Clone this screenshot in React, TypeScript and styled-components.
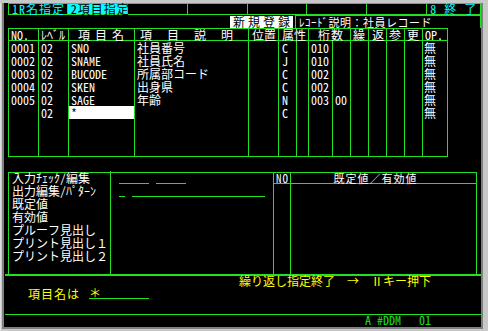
import React from 'react';
import styled, { createGlobalStyle } from 'styled-components';

// 項目定義画面 (端末エミュレータ風)

const GREEN = '#22e022';
const FONT = `"Noto Sans Mono CJK JP", "Noto Sans CJK JP", "Liberation Mono", monospace`;

const GlobalStyle = createGlobalStyle`
  html, body {
    margin: 0;
    padding: 0;
    background: #c8c8c8;
  }
`;

const Frame = styled.div`
  width: 488px;
  height: 331px;
  box-sizing: border-box;
  background: #c8c8c8;
  padding: 0 5px 5px 1px;
  border-left: 1px solid #e0e0e0;
`;

const Screen = styled.div`
  height: 100%;
  box-sizing: border-box;
  background: #000;
  border-left: 2px solid #808080;
  border-right: 2px solid #808080;
  border-bottom: 2px solid #808080;
  padding-left: 4px;
  font-family: ${FONT};
  font-size: 12px;
  color: #fff;
`;

const TabRow = styled.div`
  display: flex;
  margin-top: 3px;
  height: 12px;
`;

const Tab = styled.div<{ $active?: boolean; $w: number }>`
  width: ${(p) => p.$w}px;
  box-sizing: border-box;
  border: 1px solid ${GREEN};
  border-left: none;
  &:first-child {
    border-left: 1px solid ${GREEN};
  }
  background: ${(p) => (p.$active ? '#00ffff' : '#000')};
  color: ${(p) => (p.$active ? '#000' : '#00ffff')};
  line-height: 10px;
  padding-left: 3px;
  white-space: nowrap;
  letter-spacing: 1px;
`;

const InfoRow = styled.div`
  display: flex;
  height: 13px;
  align-items: stretch;
  padding-left: 222px;
`;

const ModeBox = styled.div`
  width: 63px;
  margin-top: 1px;
  background: #fff;
  color: #000;
  line-height: 12px;
  letter-spacing: 3px;
  padding-left: 3px;
  box-sizing: border-box;
  white-space: nowrap;
`;

const RecordBox = styled.div`
  flex: 1;
  margin-left: 2px;
  border: 1px solid ${GREEN};
  border-bottom: none;
  line-height: 12px;
  padding-left: 3px;
  white-space: nowrap;
  font-size: 11px;
  letter-spacing: 0.5px;
`;

const Grid = styled.table`
  border-collapse: collapse;
  table-layout: fixed;
  width: 439px;
  font-size: 12px;
  td, th {
    padding: 0;
    white-space: nowrap;
    font-weight: normal;
  }
`;

const Head = styled.th<{ $pad?: number; $ls?: number }>`
  border: 1px solid ${GREEN};
  height: 11px;
  line-height: 11px;
  text-align: left;
  padding-left: ${(p) => p.$pad ?? 2}px !important;
  letter-spacing: ${(p) => p.$ls ?? 0}px;
`;

const Cell = styled.td<{ $pad?: number; $input?: boolean }>`
  border-left: 1px solid ${GREEN};
  border-right: 1px solid ${GREEN};
  height: 13px;
  line-height: 13px;
  padding-left: ${(p) => p.$pad ?? 2}px !important;
  background: ${(p) => (p.$input ? '#fff' : 'transparent')};
  color: ${(p) => (p.$input ? '#000' : '#fff')};
`;

const FillRow = styled.tr`
  td {
    height: 37px;
    border-bottom: 1px solid ${GREEN};
  }
`;

const LowerBox = styled.div`
  margin-top: 15px;
  width: 469px;
  height: 102px;
  box-sizing: border-box;
  border: 1px solid ${GREEN};
  border-bottom: none;
  display: grid;
  grid-template-columns: 102px 162px 18px 1fr;
`;

const LabelCol = styled.div`
  border-right: 1px solid ${GREEN};
  margin-top: -2px;
  padding-left: 3px;
  line-height: 13px;
  white-space: nowrap;
`;

const FieldCol = styled.div`
  padding-left: 8px;
  padding-top: 10px;
  display: flex;
  flex-direction: column;
  gap: 12px;
`;

const FieldRow = styled.div`
  display: flex;
  gap: 7px;
`;

const Underline = styled.div<{ $w: number }>`
  width: ${(p) => p.$w}px;
  height: 1px;
  background: ${GREEN};
`;

const NoCol = styled.div`
  border-left: 1px solid ${GREEN};
  border-right: 1px solid ${GREEN};
  display: flex;
  flex-direction: column;
`;

const ValueCol = styled.div`
  display: flex;
  flex-direction: column;
`;

const SubHead = styled.div<{ $center?: boolean }>`
  height: 10px;
  line-height: 10px;
  border-bottom: 1px solid ${GREEN};
  text-align: ${(p) => (p.$center ? 'center' : 'left')};
  padding-left: ${(p) => (p.$center ? '0' : '2px')};
  padding-right: ${(p) => (p.$center ? '16px' : '0')};
  font-size: 11px;
  letter-spacing: 1px;
`;

const ThickLine = styled.div`
  margin-left: -3px;
  height: 2px;
  background: ${GREEN};
`;

const Message = styled.div`
  height: 11px;
  line-height: 10px;
  padding-left: 231px;
  color: #ffff00;
  white-space: nowrap;
`;

const PromptRow = styled.div`
  display: flex;
  align-items: flex-start;
  height: 27px;
  padding-left: 20px;
  color: #ffff00;
  line-height: 13px;
`;

const PromptLabel = styled.span`
  width: 61px;
  letter-spacing: 1px;
`;

const PromptField = styled.div`
  width: 60px;
  height: 11px;
  line-height: 11px;
  border-bottom: 1px solid ${GREEN};
`;

const ThinLine = styled.div`
  margin-left: -3px;
  height: 1px;
  background: ${GREEN};
`;

const Status = styled.div`
  padding-left: 357px;
  height: 9px;
  line-height: 9px;
  color: ${GREEN};
  white-space: pre;
`;

const cols = [30, 30, 66, 114, 30, 18, 12, 24, 18, 18, 18, 18, 18, 25];

const rows = [
  { no: '0001', lv: '02', name: 'SNO', desc: '社員番号', attr: 'C', len: '010', dec: '' },
  { no: '0002', lv: '02', name: 'SNAME', desc: '社員氏名', attr: 'J', len: '010', dec: '' },
  { no: '0003', lv: '02', name: 'BUCODE', desc: '所属部コード', attr: 'C', len: '002', dec: '' },
  { no: '0004', lv: '02', name: 'SKEN', desc: '出身県', attr: 'C', len: '002', dec: '' },
  { no: '0005', lv: '02', name: 'SAGE', desc: '年齢', attr: 'N', len: '003', dec: '00' },
];

const labels = [
  '入力ﾁｪｯｸ/編集',
  '出力編集/ﾊﾟﾀｰﾝ',
  '既定値',
  '有効値',
  'プルーフ見出し',
  'プリント見出し１',
  'プリント見出し２',
];

const tabs = [
  { text: '1R名指定', w: 60 },
  { text: '2項目指定', w: 60, active: true },
  { text: '', w: 60 },
  { text: '', w: 60 },
  { text: '', w: 60 },
  { text: '', w: 60 },
  { text: '', w: 60 },
  { text: '8 終 了', w: 54 },
];

export default function App() {
  return (
    <>
      <GlobalStyle />
      <Frame>
        <Screen>
          <TabRow>
            {tabs.map((t, i) => (
              <Tab key={i} $w={t.w} $active={t.active}>
                {t.text}
              </Tab>
            ))}
          </TabRow>
          <InfoRow>
            <ModeBox>新規登録</ModeBox>
            <RecordBox>ﾚｺｰﾄﾞ説明：社員レコード</RecordBox>
          </InfoRow>
          <Grid>
            <colgroup>
              {cols.map((w, i) => (
                <col key={i} style={{ width: w }} />
              ))}
            </colgroup>
            <thead>
              <tr>
                <Head>NO.</Head>
                <Head>ﾚﾍﾞﾙ</Head>
                <Head $pad={9} $ls={5}>項目名</Head>
                <Head $pad={5} $ls={15}>項目説明</Head>
                <Head $pad={3}>位置</Head>
                <Head colSpan={2} $pad={3}>属性</Head>
                <Head colSpan={2} $pad={9} $ls={1}>桁数</Head>
                <Head $pad={2}>繰</Head>
                <Head $pad={3}>返</Head>
                <Head $pad={2}>参</Head>
                <Head $pad={2}>更</Head>
                <Head $pad={2}>OP.</Head>
              </tr>
            </thead>
            <tbody>
              {rows.map((r) => (
                <tr key={r.no}>
                  <Cell>{r.no}</Cell>
                  <Cell>{r.lv}</Cell>
                  <Cell>{r.name}</Cell>
                  <Cell>{r.desc}</Cell>
                  <Cell />
                  <Cell $pad={3}>{r.attr}</Cell>
                  <Cell />
                  <Cell>{r.len}</Cell>
                  <Cell>{r.dec}</Cell>
                  <Cell />
                  <Cell />
                  <Cell />
                  <Cell />
                  <Cell $pad={1}>無</Cell>
                </tr>
              ))}
              <tr>
                <Cell />
                <Cell>02</Cell>
                <Cell $input>*</Cell>
                <Cell />
                <Cell />
                <Cell $pad={3}>C</Cell>
                <Cell />
                <Cell />
                <Cell />
                <Cell />
                <Cell />
                <Cell />
                <Cell />
                <Cell $pad={1}>無</Cell>
              </tr>
              <FillRow>
                {cols.map((_, i) => (
                  <Cell key={i} />
                ))}
              </FillRow>
            </tbody>
          </Grid>
          <LowerBox>
            <LabelCol>
              {labels.map((l) => (
                <div key={l}>{l}</div>
              ))}
            </LabelCol>
            <FieldCol>
              <FieldRow>
                <Underline $w={30} />
                <Underline $w={30} />
              </FieldRow>
              <FieldRow>
                <Underline $w={6} />
                <Underline $w={133} />
              </FieldRow>
            </FieldCol>
            <NoCol>
              <SubHead>NO</SubHead>
            </NoCol>
            <ValueCol>
              <SubHead $center>既定値／有効値</SubHead>
            </ValueCol>
          </LowerBox>
          <ThickLine />
          <Message>繰り返し指定終了　→　Ⅱキー押下</Message>
          <PromptRow>
            <PromptLabel>項目名は</PromptLabel>
            <PromptField>＊</PromptField>
          </PromptRow>
          <ThinLine />
          <Status>{'A #DDM   01'}</Status>
        </Screen>
      </Frame>
    </>
  );
}
